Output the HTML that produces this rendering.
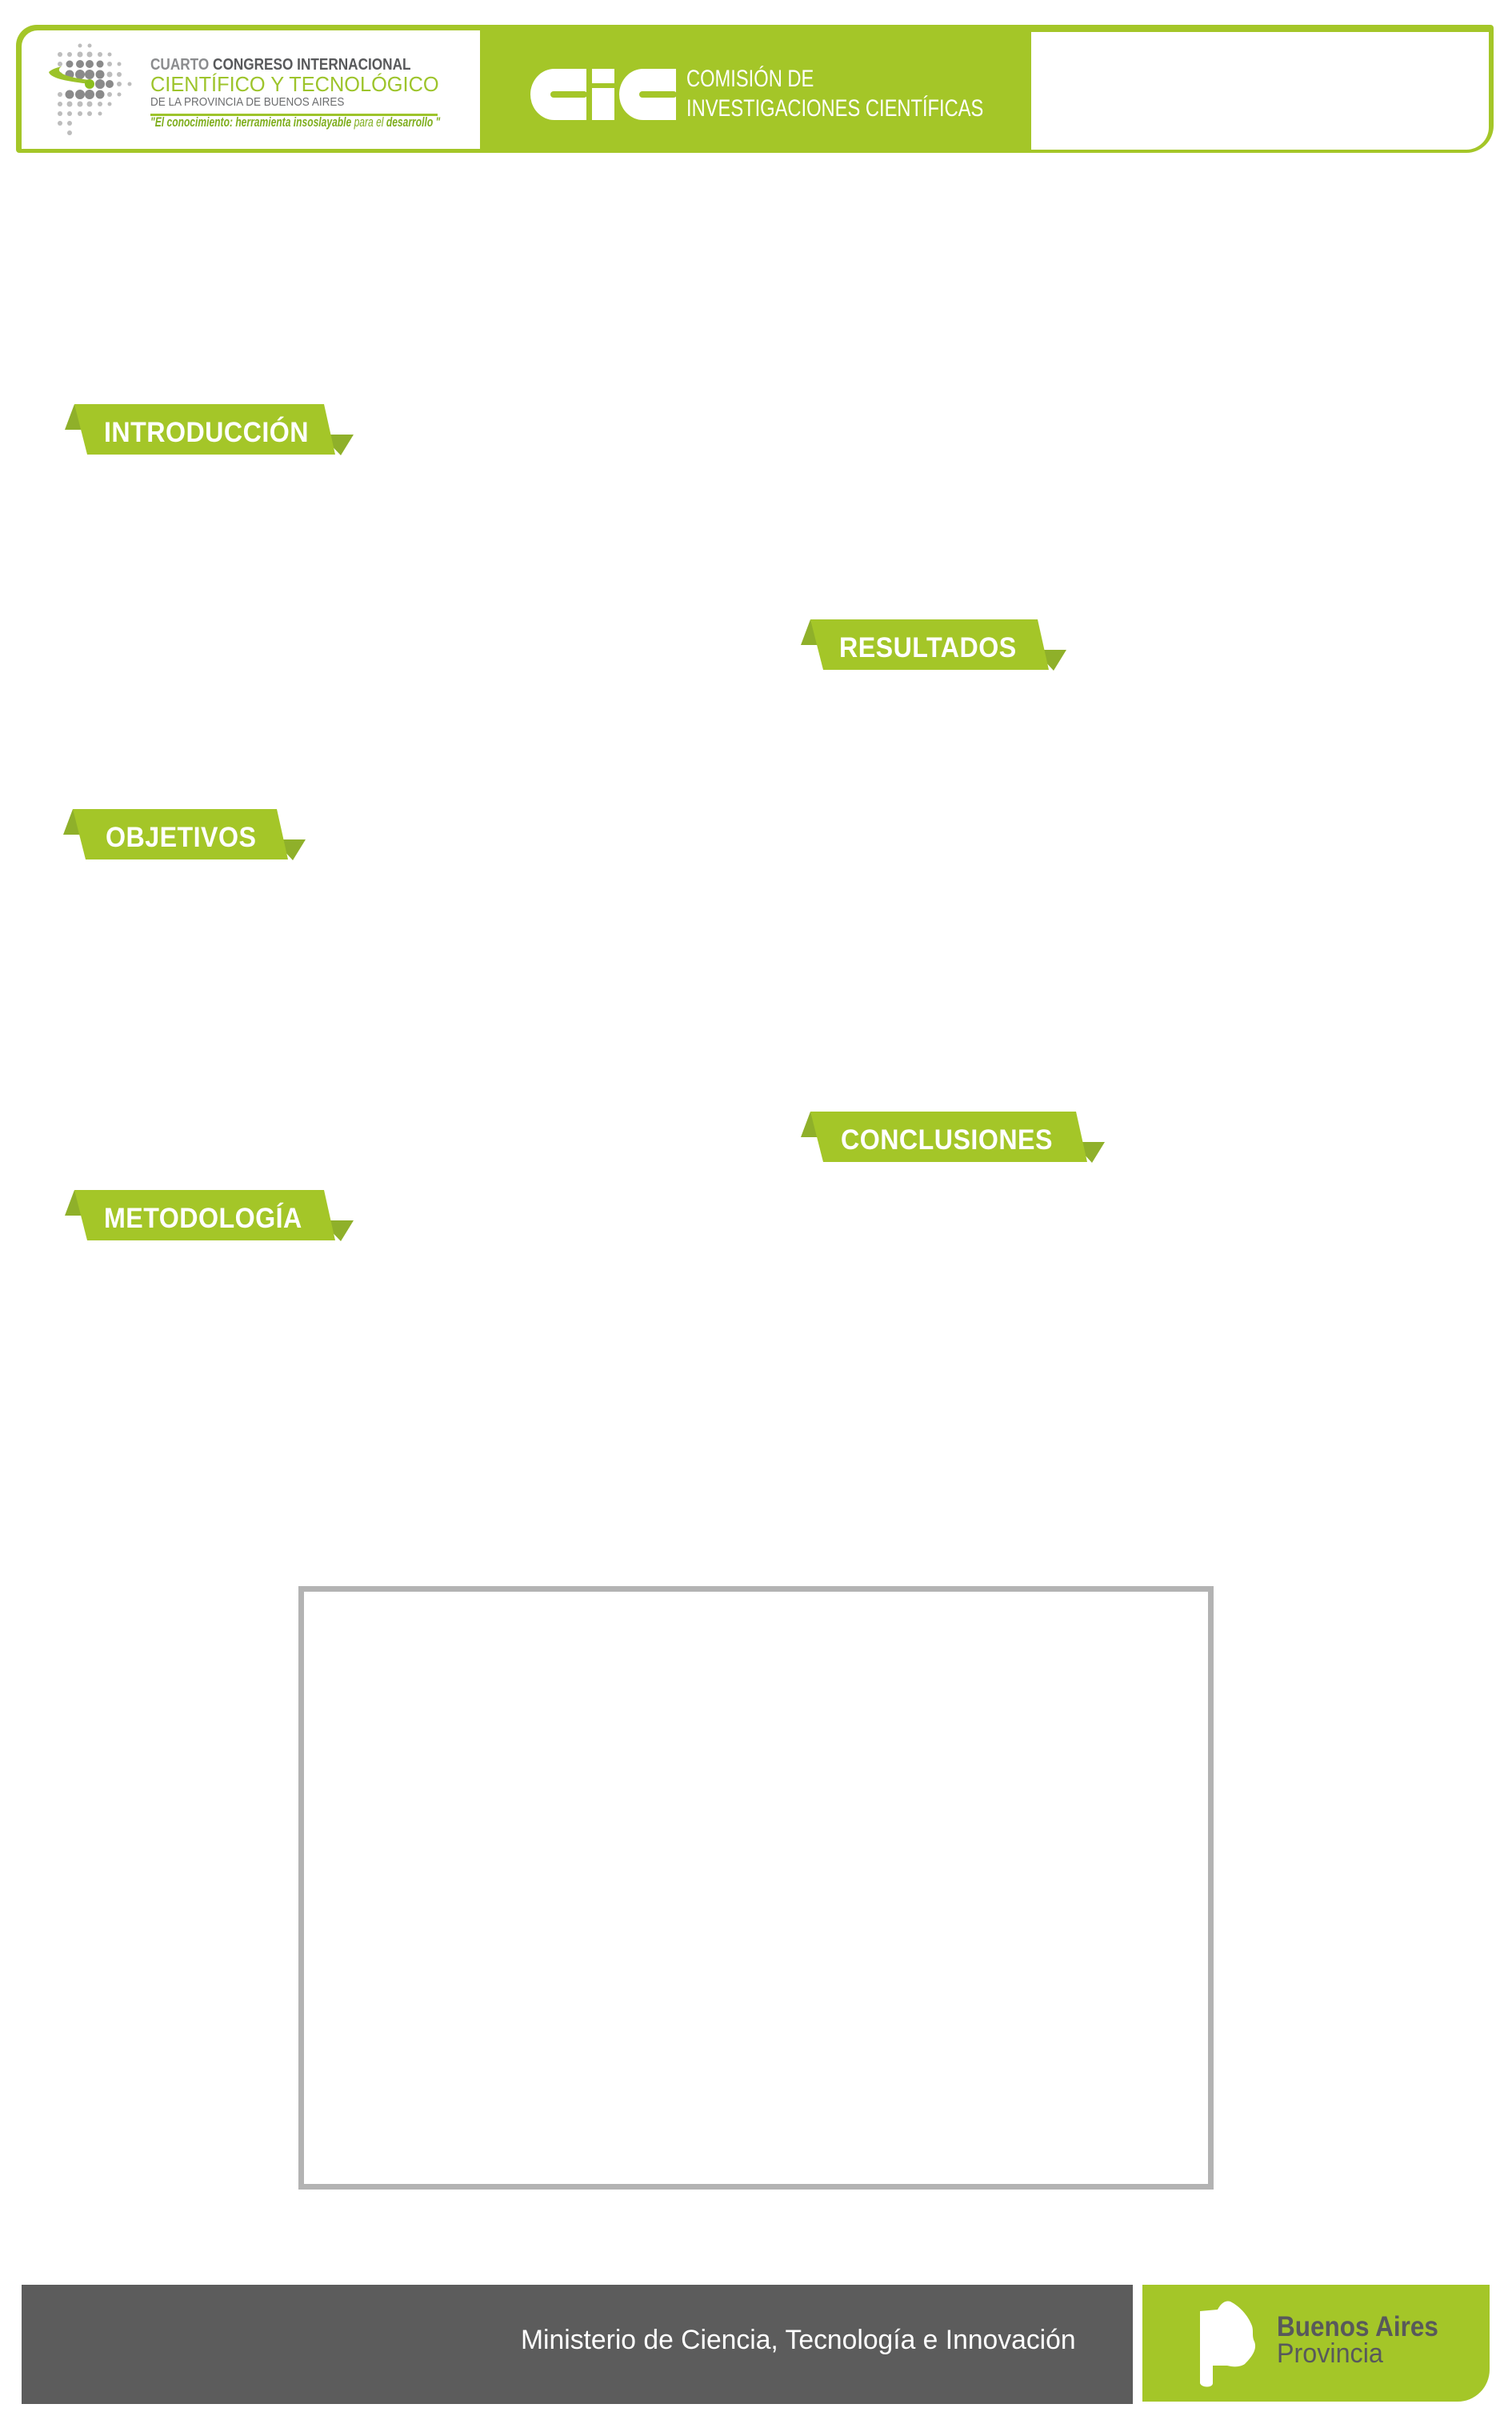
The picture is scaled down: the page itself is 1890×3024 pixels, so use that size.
<!DOCTYPE html>
<html><head><meta charset="utf-8"><style>
*{margin:0;padding:0;box-sizing:border-box}
body{width:1890px;height:3024px;background:#fff;position:relative;overflow:hidden;font-family:"Liberation Sans",sans-serif}
.abs{position:absolute}
.rib{position:absolute}
.rib span{position:absolute;color:#fff;font-weight:bold;font-size:35px;letter-spacing:0.5px;white-space:nowrap;transform:scaleX(0.92);transform-origin:0 0}
.cond{display:inline-block;transform-origin:0 0;white-space:nowrap}
</style></head><body>

<!-- header -->
<div class="abs" style="left:20px;top:31px;width:1847px;height:160px;background:#a4c628;border-radius:26px 4px 34px 4px"></div>
<div class="abs" style="left:27px;top:38px;width:573px;height:148px;background:#fff;border-radius:20px 0 0 0"></div>
<div class="abs" style="left:1289px;top:40px;width:572px;height:147px;background:#fff;border-radius:0 0 28px 0"></div>

<!-- congress logo -->
<svg class="abs" style="left:55px;top:50px" width="130" height="120" viewBox="0 0 130 120">
<g fill="#bdbdbd">
<circle cx="45" cy="7" r="2.5"/><circle cx="57" cy="7" r="2.5"/>
<circle cx="20" cy="18" r="3"/><circle cx="32" cy="18" r="3"/><circle cx="45" cy="18" r="3.5"/><circle cx="57" cy="18" r="3.5"/><circle cx="70" cy="18" r="3"/><circle cx="82" cy="18" r="2.5"/>
<circle cx="20" cy="30" r="3"/><circle cx="82" cy="30" r="3"/><circle cx="94" cy="30" r="2.5"/>
<circle cx="20" cy="43" r="3"/><circle cx="82" cy="43" r="3.5"/><circle cx="94" cy="43" r="3"/>
<circle cx="20" cy="68" r="3"/><circle cx="82" cy="68" r="3"/><circle cx="94" cy="68" r="2.5"/>
<circle cx="20" cy="80" r="3"/><circle cx="32" cy="80" r="3.5"/><circle cx="45" cy="80" r="3.5"/><circle cx="57" cy="80" r="3.5"/><circle cx="70" cy="80" r="3"/><circle cx="82" cy="80" r="2.5"/>
<circle cx="20" cy="92" r="3"/><circle cx="32" cy="92" r="3"/><circle cx="45" cy="92" r="3"/><circle cx="57" cy="92" r="3"/><circle cx="70" cy="92" r="2.5"/>
<circle cx="20" cy="104" r="3"/><circle cx="32" cy="104" r="3"/><circle cx="32" cy="116" r="3"/>
<circle cx="107" cy="55" r="2.5"/><circle cx="94" cy="55" r="3"/>
</g>
<g fill="#8a8a8a">
<circle cx="32" cy="30" r="4.5"/><circle cx="45" cy="30" r="5"/><circle cx="57" cy="30" r="5"/><circle cx="70" cy="30" r="4.5"/>
<circle cx="32" cy="43" r="5.5"/><circle cx="45" cy="43" r="6"/><circle cx="57" cy="43" r="6"/><circle cx="70" cy="43" r="5.5"/>
<circle cx="70" cy="55" r="6"/><circle cx="82" cy="55" r="5"/>
<circle cx="32" cy="68" r="5.5"/><circle cx="45" cy="68" r="6"/><circle cx="57" cy="68" r="6"/><circle cx="70" cy="68" r="5.5"/>
</g>
<path d="M58 55 C30 52 8 48 6 40 C10 36 18 34 22 33 C14 38 20 46 58 50Z" fill="#9cc32a"/>
<circle cx="57" cy="55" r="6" fill="#8cbf1e"/>
</svg>
<div class="abs" style="left:188px;top:70px;font-size:20px;font-weight:bold;color:#58595b;white-space:nowrap"><span class="cond" style="transform:scaleX(0.86)"><span style="color:#8b8c8e">CUARTO</span> CONGRESO INTERNACIONAL</span></div>
<div class="abs" style="left:188px;top:90px;font-size:26px;color:#9dc42b;white-space:nowrap"><span class="cond" style="transform:scaleX(0.975)">CIENTÍFICO Y TECNOLÓGICO</span></div>
<div class="abs" style="left:188px;top:119px;font-size:15px;color:#6d6e70;white-space:nowrap"><span class="cond" style="transform:scaleX(0.9)">DE LA PROVINCIA DE BUENOS AIRES</span></div>
<div class="abs" style="left:188px;top:142px;width:359px;height:3px;background:#9dc42b"></div>
<div class="abs" style="left:188px;top:143px;font-size:17px;font-style:italic;font-weight:bold;color:#7fae1e;white-space:nowrap"><span class="cond" style="transform:scaleX(0.71)">"El conocimiento: herramienta insoslayable <span style="font-weight:normal">para el</span> desarrollo "</span></div>

<!-- CIC -->
<svg class="abs" style="left:663px;top:86px" width="182" height="64" viewBox="0 0 182 64">
<path d="M30 0H70V64H30A30 32 0 0 1 30 0Z" fill="#fff"/>
<rect x="25" y="28" width="46" height="8" rx="4" fill="#a4c628"/>
<rect x="77" y="0" width="28" height="18" fill="#fff"/>
<rect x="77" y="24" width="28" height="40" fill="#fff"/>
<path d="M141 0H182V64H141A30 32 0 0 1 141 0Z" fill="#fff"/>
<rect x="136" y="28" width="47" height="8" rx="4" fill="#a4c628"/>
</svg>
<div class="abs" style="left:858px;top:82px;font-size:30px;color:#fff;white-space:nowrap"><span class="cond" style="transform:scaleX(0.79)">COMISIÓN DE</span></div>
<div class="abs" style="left:858px;top:119px;font-size:30px;color:#fff;white-space:nowrap"><span class="cond" style="transform:scaleX(0.79)">INVESTIGACIONES CIENTÍFICAS</span></div>

<div class="rib" style="left:81px;top:505px;width:362px;height:64px">
<svg width="362" height="64" viewBox="0 0 362 64" preserveAspectRatio="none" class="abs" style="left:0;top:0">
<polygon points="12,0 0,32 22,32" fill="#8fb02a"/>
<polygon points="320,38 361,38 345,64" fill="#8fb02a"/>
<polygon points="12,0 324,0 338,63 28,63" fill="#a4c628"/>
</svg>
<span style="left:49px;top:16px">INTRODUCCIÓN</span></div>

<div class="rib" style="left:1001px;top:774px;width:333px;height:64px">
<svg width="333" height="64" viewBox="0 0 333 64" preserveAspectRatio="none" class="abs" style="left:0;top:0">
<polygon points="12,0 0,32 22,32" fill="#8fb02a"/>
<polygon points="292,38 332,38 316,64" fill="#8fb02a"/>
<polygon points="12,0 296,0 310,63 28,63" fill="#a4c628"/>
</svg>
<span style="left:48px;top:16px">RESULTADOS</span></div>

<div class="rib" style="left:79px;top:1011px;width:304px;height:64px">
<svg width="304" height="64" viewBox="0 0 304 64" preserveAspectRatio="none" class="abs" style="left:0;top:0">
<polygon points="12,0 0,32 22,32" fill="#8fb02a"/>
<polygon points="263,38 303,38 287,64" fill="#8fb02a"/>
<polygon points="12,0 267,0 281,63 28,63" fill="#a4c628"/>
</svg>
<span style="left:53px;top:16px">OBJETIVOS</span></div>

<div class="rib" style="left:1001px;top:1389px;width:381px;height:64px">
<svg width="381" height="64" viewBox="0 0 381 64" preserveAspectRatio="none" class="abs" style="left:0;top:0">
<polygon points="12,0 0,32 22,32" fill="#8fb02a"/>
<polygon points="340,38 380,38 364,64" fill="#8fb02a"/>
<polygon points="12,0 344,0 358,63 28,63" fill="#a4c628"/>
</svg>
<span style="left:50px;top:16px">CONCLUSIONES</span></div>

<div class="rib" style="left:81px;top:1487px;width:362px;height:64px">
<svg width="362" height="64" viewBox="0 0 362 64" preserveAspectRatio="none" class="abs" style="left:0;top:0">
<polygon points="12,0 0,32 22,32" fill="#8fb02a"/>
<polygon points="320,38 361,38 345,64" fill="#8fb02a"/>
<polygon points="12,0 324,0 338,63 28,63" fill="#a4c628"/>
</svg>
<span style="left:49px;top:16px">METODOLOGÍA</span></div>

<!-- gray box -->
<div class="abs" style="left:373px;top:1982px;width:1144px;height:754px;border:7px solid #b3b3b3"></div>

<!-- footer -->
<div class="abs" style="left:27px;top:2855px;width:1389px;height:149px;background:#5c5c5c"></div>
<div class="abs" style="left:651px;top:2905px;font-size:34px;color:#fff;white-space:nowrap"><span class="cond" style="transform:scaleX(0.99)">Ministerio de Ciencia, Tecnología e Innovación</span></div>
<div class="abs" style="left:1428px;top:2855px;width:434px;height:146px;background:#a4c628;border-radius:0 0 40px 0"></div>
<svg class="abs" style="left:1494px;top:2874px" width="82" height="110" viewBox="0 0 82 110">
<path d="M6 14 L28 12 C32 4 38 0 44 2 C56 8 66 20 70 30 C74 38 70 44 74 52 C78 62 70 72 62 80 C56 84 48 84 40 82 L22 82 L22 104 C22 110 8 110 6 104 Z" fill="#fff"/>
</svg>
<div class="abs" style="left:1596px;top:2888px;font-size:35px;font-weight:bold;color:#58595b;white-space:nowrap"><span class="cond" style="transform:scaleX(0.9)">Buenos Aires</span></div>
<div class="abs" style="left:1596px;top:2922px;font-size:34px;color:#58595b;white-space:nowrap"><span class="cond" style="transform:scaleX(0.95)">Provincia</span></div>

</body></html>
